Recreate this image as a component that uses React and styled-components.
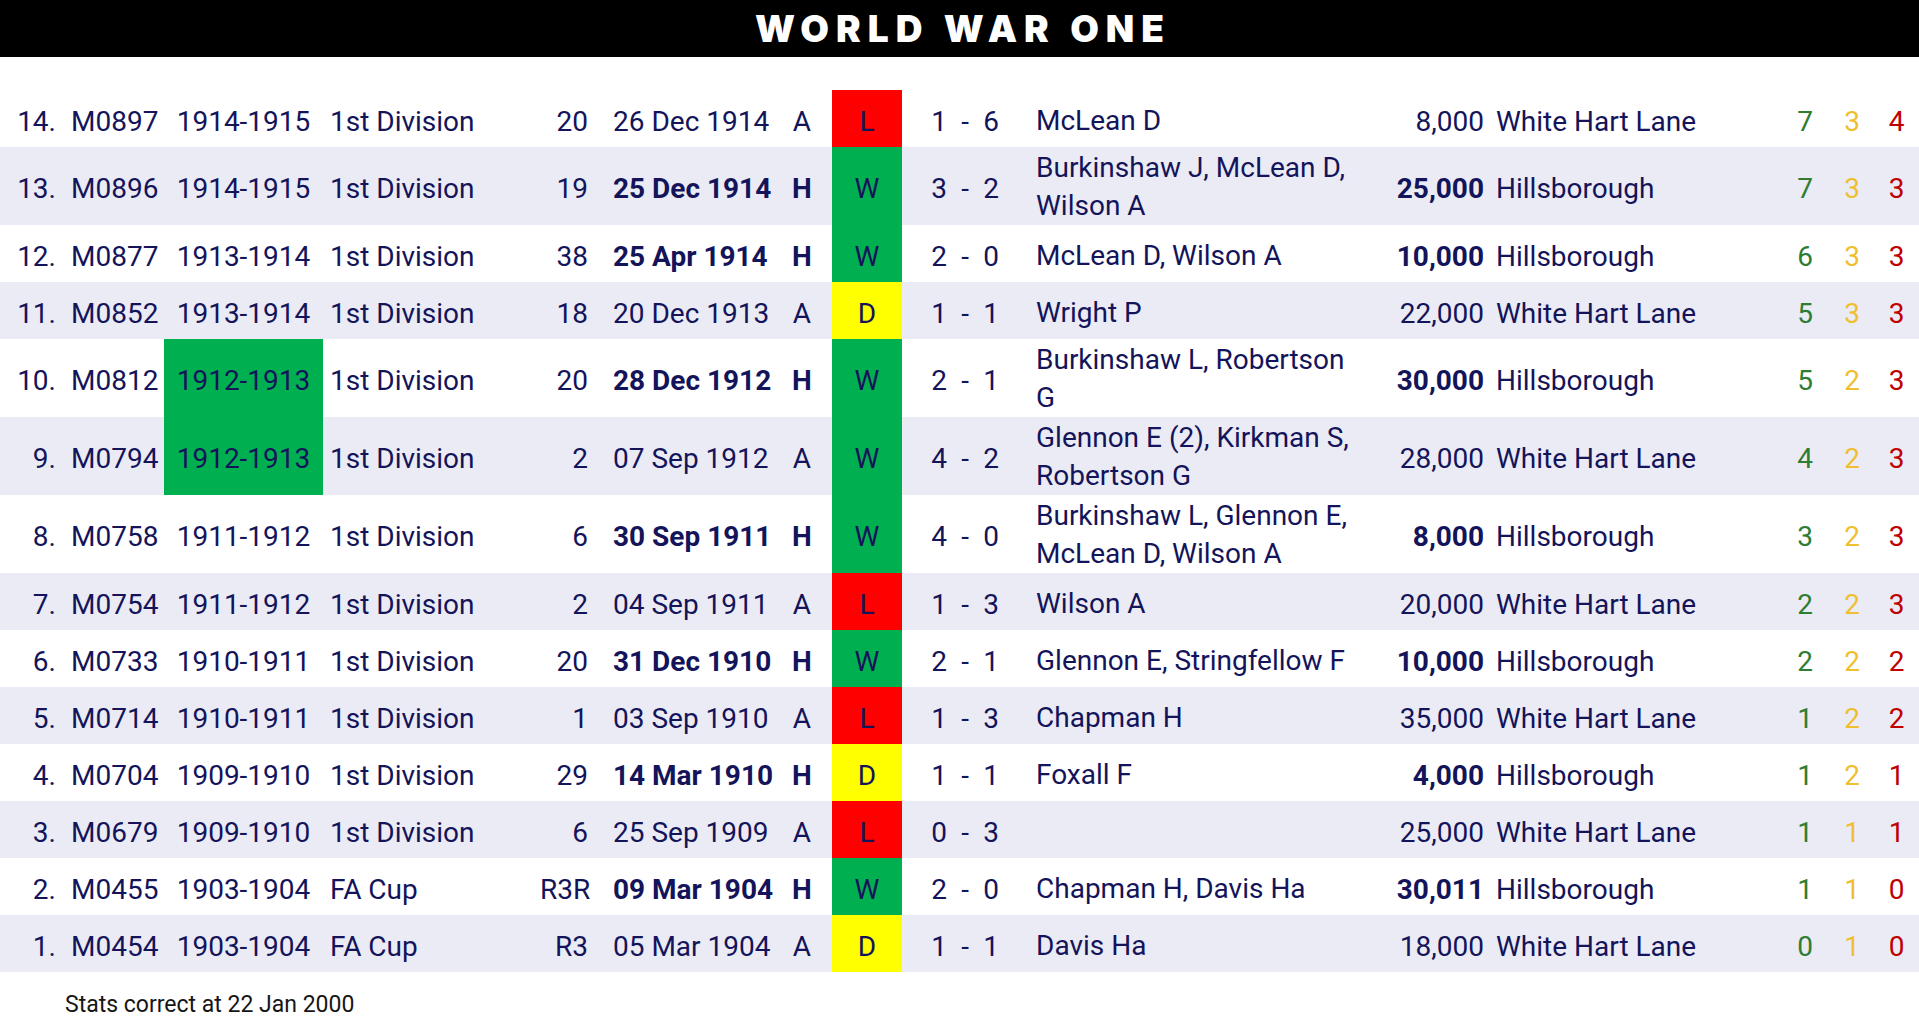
import styled, { createGlobalStyle } from "styled-components";

const GlobalStyle = createGlobalStyle`
  html, body {
    margin: 0;
    padding: 0;
    background: #ffffff;
  }
  body {
    font-family: Roboto, "Noto Sans", "Liberation Sans", sans-serif;
    color: #14145a;
  }
`;

const NAVY = "#14145a";
const RESULT_COLOURS = { W: "#00b050", D: "#ffff00", L: "#ff0000" };
const TALLY_COLOURS = { w: "#2e7d32", d: "#f0bf30", l: "#c00000" };

// scorers are kept as the lines the sheet wraps them into
const MATCHES = [
  { n: 14, code: "M0897", season: "1914-1915", comp: "1st Division", round: "20", date: "26 Dec 1914", venue: "A", result: "L", score: [1, 6], scorers: ["McLean D"], att: "8,000", ground: "White Hart Lane", tally: [7, 3, 4] },
  { n: 13, code: "M0896", season: "1914-1915", comp: "1st Division", round: "19", date: "25 Dec 1914", venue: "H", result: "W", score: [3, 2], scorers: ["Burkinshaw J, McLean D,", "Wilson A"], att: "25,000", ground: "Hillsborough", tally: [7, 3, 3] },
  { n: 12, code: "M0877", season: "1913-1914", comp: "1st Division", round: "38", date: "25 Apr 1914", venue: "H", result: "W", score: [2, 0], scorers: ["McLean D, Wilson A"], att: "10,000", ground: "Hillsborough", tally: [6, 3, 3] },
  { n: 11, code: "M0852", season: "1913-1914", comp: "1st Division", round: "18", date: "20 Dec 1913", venue: "A", result: "D", score: [1, 1], scorers: ["Wright P"], att: "22,000", ground: "White Hart Lane", tally: [5, 3, 3] },
  { n: 10, code: "M0812", season: "1912-1913", comp: "1st Division", round: "20", date: "28 Dec 1912", venue: "H", result: "W", score: [2, 1], scorers: ["Burkinshaw L, Robertson", "G"], att: "30,000", ground: "Hillsborough", tally: [5, 2, 3], mark: true },
  { n: 9, code: "M0794", season: "1912-1913", comp: "1st Division", round: "2", date: "07 Sep 1912", venue: "A", result: "W", score: [4, 2], scorers: ["Glennon E (2), Kirkman S,", "Robertson G"], att: "28,000", ground: "White Hart Lane", tally: [4, 2, 3], mark: true },
  { n: 8, code: "M0758", season: "1911-1912", comp: "1st Division", round: "6", date: "30 Sep 1911", venue: "H", result: "W", score: [4, 0], scorers: ["Burkinshaw L, Glennon E,", "McLean D, Wilson A"], att: "8,000", ground: "Hillsborough", tally: [3, 2, 3] },
  { n: 7, code: "M0754", season: "1911-1912", comp: "1st Division", round: "2", date: "04 Sep 1911", venue: "A", result: "L", score: [1, 3], scorers: ["Wilson A"], att: "20,000", ground: "White Hart Lane", tally: [2, 2, 3] },
  { n: 6, code: "M0733", season: "1910-1911", comp: "1st Division", round: "20", date: "31 Dec 1910", venue: "H", result: "W", score: [2, 1], scorers: ["Glennon E, Stringfellow F"], att: "10,000", ground: "Hillsborough", tally: [2, 2, 2] },
  { n: 5, code: "M0714", season: "1910-1911", comp: "1st Division", round: "1", date: "03 Sep 1910", venue: "A", result: "L", score: [1, 3], scorers: ["Chapman H"], att: "35,000", ground: "White Hart Lane", tally: [1, 2, 2] },
  { n: 4, code: "M0704", season: "1909-1910", comp: "1st Division", round: "29", date: "14 Mar 1910", venue: "H", result: "D", score: [1, 1], scorers: ["Foxall F"], att: "4,000", ground: "Hillsborough", tally: [1, 2, 1] },
  { n: 3, code: "M0679", season: "1909-1910", comp: "1st Division", round: "6", date: "25 Sep 1909", venue: "A", result: "L", score: [0, 3], scorers: [], att: "25,000", ground: "White Hart Lane", tally: [1, 1, 1] },
  { n: 2, code: "M0455", season: "1903-1904", comp: "FA Cup", round: "R3R", date: "09 Mar 1904", venue: "H", result: "W", score: [2, 0], scorers: ["Chapman H, Davis Ha"], att: "30,011", ground: "Hillsborough", tally: [1, 1, 0] },
  { n: 1, code: "M0454", season: "1903-1904", comp: "FA Cup", round: "R3", date: "05 Mar 1904", venue: "A", result: "D", score: [1, 1], scorers: ["Davis Ha"], att: "18,000", ground: "White Hart Lane", tally: [0, 1, 0] },
];

const COLUMNS = [60, 104, 159, 217, 58, 174, 60, 70, 122, 326, 140, 290, 50, 44, 45];

const Page = styled.main`
  width: 1919px;
  display: flex;
  flex-direction: column;
`;

const Banner = styled.header`
  height: 57px;
  background: #000000;
  color: #ffffff;
  display: flex;
  align-items: center;
  justify-content: center;
  font-family: Inter, "Liberation Sans", sans-serif;
  font-weight: 900;
  font-size: 37px;
  letter-spacing: 7px;
  padding-left: 7px;
`;

const Table = styled.table`
  width: 1919px;
  margin-top: 33px;
  border-collapse: collapse;
  table-layout: fixed;
  font-size: 28px;
  line-height: 39px;
  color: ${NAVY};
`;

const Row = styled.tr`
  height: ${(p) => (p.$tall ? "78px" : "57px")};
  background: ${(p) => (p.$alt ? "#ebebf5" : "#ffffff")};
`;

const Cell = styled.td`
  padding: 5px 0 0;
  vertical-align: middle;
  white-space: nowrap;
`;

const IndexCell = styled(Cell)`
  text-align: right;
  padding-right: 4px;
`;

const CodeCell = styled(Cell)`
  padding-left: 11px;
`;

const SeasonCell = styled(Cell)`
  text-align: center;
  background: ${(p) => (p.$mark ? "#00b050" : "transparent")};
`;

const CompCell = styled(Cell)`
  padding-left: 7px;
`;

const RoundCell = styled(Cell)`
  text-align: right;
  padding-right: 10px;
`;

const DateCell = styled(Cell)`
  padding-left: 15px;
  font-weight: ${(p) => (p.$bold ? 700 : 400)};
`;

const VenueCell = styled(Cell)`
  text-align: center;
  font-weight: ${(p) => (p.$bold ? 700 : 400)};
`;

const ResultCell = styled(Cell)`
  text-align: center;
  background: ${(p) => RESULT_COLOURS[p.$result]};
`;

const ScoreCell = styled(Cell)`
  padding-left: 24px;
`;

const ScoreGrid = styled.span`
  display: inline-grid;
  grid-template-columns: repeat(3, 26px);
  justify-items: center;
`;

const ScorersCell = styled(Cell)`
  padding-left: 12px;
  padding-top: ${(p) => (p.$multi ? "2px" : "5px")};
`;

const ScorerLine = styled.div`
  height: 38px;
  line-height: 38px;
`;

const AttendanceCell = styled(Cell)`
  text-align: right;
  padding-right: 6px;
  font-weight: ${(p) => (p.$bold ? 700 : 400)};
`;

const GroundCell = styled(Cell)`
  padding-left: 6px;
`;

const TallyCell = styled(Cell)`
  text-align: center;
  color: ${(p) => TALLY_COLOURS[p.$tone]};
`;

const Footnote = styled.p`
  margin: 18px 0 0;
  padding-left: 65px;
  font-size: 23px;
  line-height: 30px;
  color: #161616;
`;

const MatchRow = ({ m, alt }) => {
  const home = m.venue === "H";
  const multi = m.scorers.length > 1;
  return (
    <Row $alt={alt} $tall={multi}>
      <IndexCell>{m.n}.</IndexCell>
      <CodeCell>{m.code}</CodeCell>
      <SeasonCell $mark={m.mark}>{m.season}</SeasonCell>
      <CompCell>{m.comp}</CompCell>
      <RoundCell>{m.round}</RoundCell>
      <DateCell $bold={home}>{m.date}</DateCell>
      <VenueCell $bold={home}>{m.venue}</VenueCell>
      <ResultCell $result={m.result}>{m.result}</ResultCell>
      <ScoreCell>
        <ScoreGrid>
          <span>{m.score[0]}</span>
          <span>-</span>
          <span>{m.score[1]}</span>
        </ScoreGrid>
      </ScoreCell>
      <ScorersCell $multi={multi}>
        {m.scorers.map((line) => (
          <ScorerLine key={line}>{line}</ScorerLine>
        ))}
      </ScorersCell>
      <AttendanceCell $bold={home}>{m.att}</AttendanceCell>
      <GroundCell>{m.ground}</GroundCell>
      <TallyCell $tone="w">{m.tally[0]}</TallyCell>
      <TallyCell $tone="d">{m.tally[1]}</TallyCell>
      <TallyCell $tone="l">{m.tally[2]}</TallyCell>
    </Row>
  );
};

const App = () => {
  return (
    <Page>
      <GlobalStyle />
      <Banner>WORLD WAR ONE</Banner>
      <Table>
        <colgroup>
          {COLUMNS.map((w, i) => (
            <col key={i} style={{ width: w }} />
          ))}
        </colgroup>
        <tbody>
          {MATCHES.map((m, i) => (
            <MatchRow key={m.code} m={m} alt={i % 2 === 1} />
          ))}
        </tbody>
      </Table>
      <Footnote>Stats correct at 22 Jan 2000</Footnote>
    </Page>
  );
};

export default App;
